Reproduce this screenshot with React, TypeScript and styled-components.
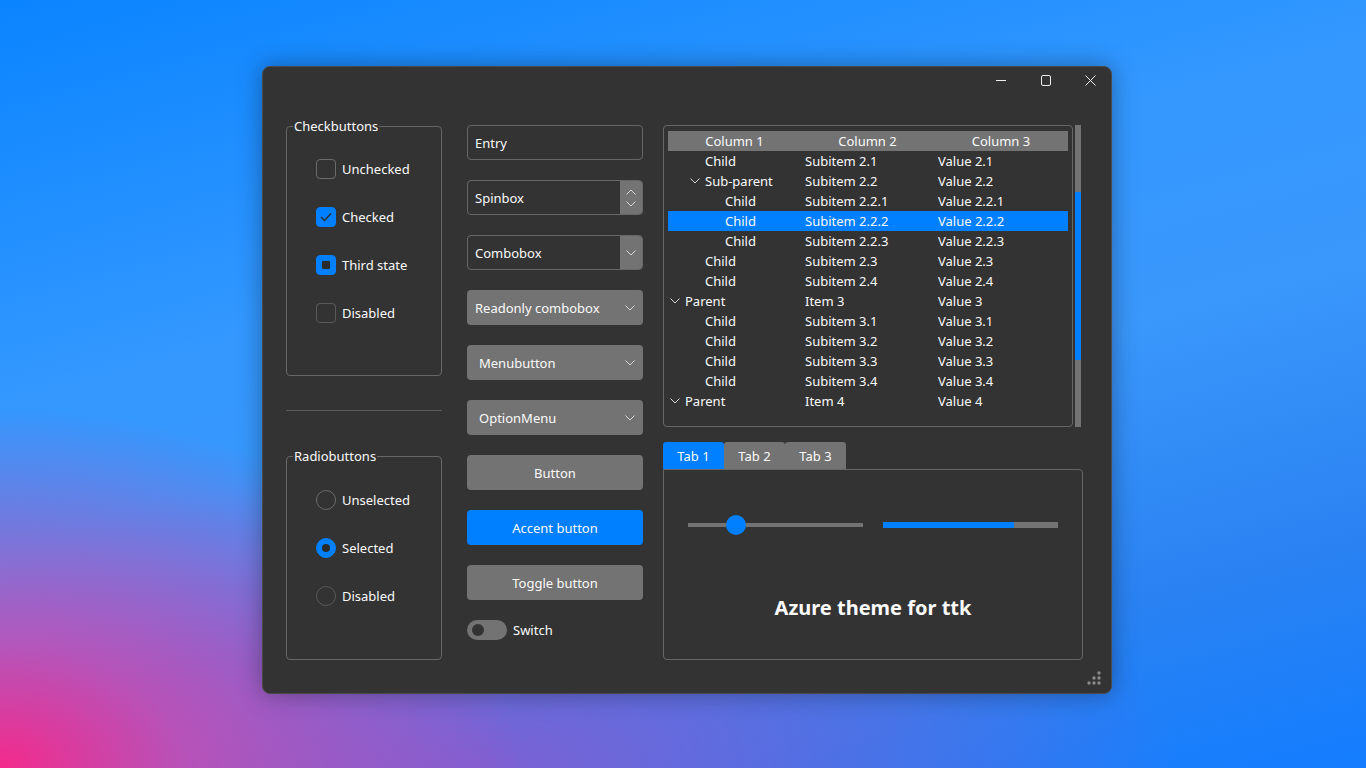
import React from "react";
import styled, { createGlobalStyle, css } from "styled-components";

const GlobalStyle = createGlobalStyle`
  html, body {
    margin: 0;
    padding: 0;
    width: 100%;
    height: 100%;
    overflow: hidden;
  }
  body {
    font-family: "Noto Sans", "Open Sans", sans-serif;
    font-size: 13px;
    color: #fafafa;
  }
`;

const ACCENT = "#007fff";
const BORDER = "#676767";
const GREY = "#737373";
const BG = "#333333";

type TreeRow = {
  level: number;
  open?: boolean;
  selected?: boolean;
  cells: [string, string, string];
};

const treeRows: TreeRow[] = [
  { level: 1, cells: ["Child", "Subitem 2.1", "Value 2.1"] },
  { level: 1, open: true, cells: ["Sub-parent", "Subitem 2.2", "Value 2.2"] },
  { level: 2, cells: ["Child", "Subitem 2.2.1", "Value 2.2.1"] },
  { level: 2, selected: true, cells: ["Child", "Subitem 2.2.2", "Value 2.2.2"] },
  { level: 2, cells: ["Child", "Subitem 2.2.3", "Value 2.2.3"] },
  { level: 1, cells: ["Child", "Subitem 2.3", "Value 2.3"] },
  { level: 1, cells: ["Child", "Subitem 2.4", "Value 2.4"] },
  { level: 0, open: true, cells: ["Parent", "Item 3", "Value 3"] },
  { level: 1, cells: ["Child", "Subitem 3.1", "Value 3.1"] },
  { level: 1, cells: ["Child", "Subitem 3.2", "Value 3.2"] },
  { level: 1, cells: ["Child", "Subitem 3.3", "Value 3.3"] },
  { level: 1, cells: ["Child", "Subitem 3.4", "Value 3.4"] },
  { level: 0, open: true, cells: ["Parent", "Item 4", "Value 4"] },
];

const Chevron = ({ up = false, size = 10 }: { up?: boolean; size?: number }) => (
  <svg width={size} height={size / 2 + 1} viewBox="0 0 10 6" fill="none">
    <polyline
      points={up ? "0.5,5.5 5,1 9.5,5.5" : "0.5,0.5 5,5 9.5,0.5"}
      stroke="#d6d6d6"
      strokeWidth="1"
    />
  </svg>
);

const App = () => {
  return (
    <>
      <GlobalStyle />
      <Desktop>
        <Window>
          <TitleBar>
            <CaptionButton>
              <svg width="10" height="10" viewBox="0 0 10 10">
                <line x1="0" y1="5.5" x2="10" y2="5.5" stroke="#eee" strokeWidth="1" />
              </svg>
            </CaptionButton>
            <CaptionButton>
              <svg width="10" height="11" viewBox="0 0 10 11" fill="none">
                <rect x="0.5" y="0.5" width="9" height="10" rx="1.5" stroke="#eee" strokeWidth="1" />
              </svg>
            </CaptionButton>
            <CaptionButton>
              <svg width="11" height="11" viewBox="0 0 11 11">
                <path d="M0.5 0.5 L10.5 10.5 M10.5 0.5 L0.5 10.5" stroke="#eee" strokeWidth="1" />
              </svg>
            </CaptionButton>
          </TitleBar>

          <Body>
            <LeftColumn>
              <LabelFrame $height={250}>
                <FrameLabel>Checkbuttons</FrameLabel>
                <OptionList $top={32}>
                  <OptionRow>
                    <CheckBox />
                    Unchecked
                  </OptionRow>
                  <OptionRow>
                    <CheckBox $on>
                      <svg width="12" height="10" viewBox="0 0 12 10" fill="none">
                        <polyline points="1,5 4.5,8.5 11,1.5" stroke="#2b2b2b" strokeWidth="1.4" />
                      </svg>
                    </CheckBox>
                    Checked
                  </OptionRow>
                  <OptionRow>
                    <CheckBox $on>
                      <ThirdMark />
                    </CheckBox>
                    Third state
                  </OptionRow>
                  <OptionRow>
                    <CheckBox $disabled />
                    Disabled
                  </OptionRow>
                </OptionList>
              </LabelFrame>

              <Separator />

              <LabelFrame $height={204}>
                <FrameLabel>Radiobuttons</FrameLabel>
                <OptionList $top={33}>
                  <OptionRow>
                    <Radio />
                    Unselected
                  </OptionRow>
                  <OptionRow>
                    <Radio $on>
                      <RadioDot />
                    </Radio>
                    Selected
                  </OptionRow>
                  <OptionRow>
                    <Radio $disabled />
                    Disabled
                  </OptionRow>
                </OptionList>
              </LabelFrame>
            </LeftColumn>

            <MiddleColumn>
              <Field>
                <FieldText>Entry</FieldText>
              </Field>
              <Field>
                <FieldText>Spinbox</FieldText>
                <SideButton>
                  <Chevron up />
                  <Chevron />
                </SideButton>
              </Field>
              <Field>
                <FieldText>Combobox</FieldText>
                <SideButton>
                  <Chevron />
                </SideButton>
              </Field>
              <DropButton $indent={8}>
                Readonly combobox
                <Chevron />
              </DropButton>
              <DropButton $indent={12}>
                Menubutton
                <Chevron />
              </DropButton>
              <DropButton $indent={12}>
                OptionMenu
                <Chevron />
              </DropButton>
              <PushButton>Button</PushButton>
              <PushButton $accent>Accent button</PushButton>
              <PushButton>Toggle button</PushButton>
              <SwitchRow>
                <SwitchTrack>
                  <SwitchKnob />
                </SwitchTrack>
                Switch
              </SwitchRow>
            </MiddleColumn>

            <RightColumn>
              <TreeArea>
                <TreeFrame>
                  <TreeHeader>
                    <HeadCell>Column 1</HeadCell>
                    <HeadCell>Column 2</HeadCell>
                    <HeadCell>Column 3</HeadCell>
                  </TreeHeader>
                  {treeRows.map((row, i) => (
                    <TreeLine key={i} $selected={row.selected}>
                      <TreeCell style={{ paddingLeft: 2 + row.level * 20 }}>
                        <Expander>{row.open && <Chevron />}</Expander>
                        {row.cells[0]}
                      </TreeCell>
                      <TreeCell>{row.cells[1]}</TreeCell>
                      <TreeCell>{row.cells[2]}</TreeCell>
                    </TreeLine>
                  ))}
                </TreeFrame>
                <ScrollTrack>
                  <ScrollThumb />
                </ScrollTrack>
              </TreeArea>

              <Notebook>
                <TabStrip>
                  <Tab $active>Tab 1</Tab>
                  <Tab>Tab 2</Tab>
                  <Tab>Tab 3</Tab>
                </TabStrip>
                <TabPanel>
                  <ControlsRow>
                    <Scale>
                      <ScaleThumb style={{ left: 38 }} />
                    </Scale>
                    <Progress>
                      <ProgressFill style={{ width: "75%" }} />
                    </Progress>
                  </ControlsRow>
                  <Heading>Azure theme for ttk</Heading>
                </TabPanel>
              </Notebook>
            </RightColumn>
          </Body>

          <Grip>
            <svg width="16" height="16" viewBox="0 0 16 16">
              {[
                [13, 3],
                [8, 8],
                [13, 8],
                [3, 13],
                [8, 13],
                [13, 13],
              ].map(([cx, cy], i) => (
                <circle key={i} cx={cx} cy={cy} r="1.7" fill="#8a8a8a" />
              ))}
            </svg>
          </Grip>
        </Window>
      </Desktop>
    </>
  );
};

const Desktop = styled.div`
  width: 1366px;
  height: 768px;
  display: flex;
  padding: 66px 0 0 262px;
  box-sizing: border-box;
  background:
    radial-gradient(ellipse 520px 360px at 0% 100%, #f42a8b 0%, rgba(214, 70, 170, 0.75) 35%, rgba(150, 90, 200, 0) 100%),
    radial-gradient(ellipse 700px 300px at 35% 100%, rgba(140, 90, 205, 0.85) 0%, rgba(120, 100, 210, 0) 100%),
    linear-gradient(165deg, #0a84ff 0%, #3398ff 35%, #3a97fb 55%, #2a82f2 80%, #137dff 100%);
`;

const Window = styled.div`
  position: relative;
  width: 850px;
  height: 628px;
  box-sizing: border-box;
  background: ${BG};
  border: 1px solid #4a4a4a;
  border-radius: 8px;
  box-shadow: 0 0 24px rgba(0, 0, 0, 0.35);
  display: flex;
  flex-direction: column;
`;

const TitleBar = styled.div`
  height: 28px;
  display: flex;
  justify-content: flex-end;
  margin-right: -2px;
`;

const CaptionButton = styled.div`
  width: 45px;
  height: 26px;
  display: flex;
  align-items: center;
  justify-content: center;
`;

const Body = styled.div`
  display: flex;
  padding: 30px 0 0 23px;
`;

const LeftColumn = styled.div`
  width: 156px;
  margin-top: 1px;
  display: flex;
  flex-direction: column;
`;

const LabelFrame = styled.div<{ $height: number }>`
  position: relative;
  height: ${(p) => p.$height}px;
  box-sizing: border-box;
  border: 1px solid ${BORDER};
  border-radius: 4px;
`;

const FrameLabel = styled.span`
  position: absolute;
  top: -10px;
  left: 6px;
  padding: 0 1px;
  line-height: 18px;
  background: ${BG};
`;

const OptionList = styled.div<{ $top: number }>`
  display: flex;
  flex-direction: column;
  gap: 28px;
  padding: ${(p) => p.$top}px 0 0 29px;
`;

const OptionRow = styled.div`
  display: flex;
  align-items: center;
  gap: 6px;
  height: 20px;
`;

const boxBase = css<{ $on?: boolean; $disabled?: boolean }>`
  width: 20px;
  height: 20px;
  box-sizing: border-box;
  display: flex;
  align-items: center;
  justify-content: center;
  border: 1px solid ${(p) => (p.$on ? ACCENT : p.$disabled ? "#5a5a5a" : "#6c6c6c")};
  background: ${(p) => (p.$on ? ACCENT : "transparent")};
`;

const CheckBox = styled.div<{ $on?: boolean; $disabled?: boolean }>`
  ${boxBase};
  border-radius: 4px;
`;

const ThirdMark = styled.div`
  width: 8px;
  height: 8px;
  border-radius: 1px;
  background: #2b2b2b;
`;

const Radio = styled.div<{ $on?: boolean; $disabled?: boolean }>`
  ${boxBase};
  border-radius: 50%;
`;

const RadioDot = styled.div`
  width: 8px;
  height: 8px;
  border-radius: 50%;
  background: #2b2b2b;
`;

const Separator = styled.div`
  height: 1px;
  background: #5c5c5c;
  margin: 34px 0 45px;
`;

const MiddleColumn = styled.div`
  width: 176px;
  margin-left: 25px;
  display: flex;
  flex-direction: column;
  gap: 20px;
`;

const Field = styled.div`
  height: 35px;
  box-sizing: border-box;
  display: flex;
  border: 1px solid ${BORDER};
  border-radius: 4px;
  overflow: hidden;
`;

const FieldText = styled.div`
  flex: 1;
  display: flex;
  align-items: center;
  padding-left: 7px;
`;

const SideButton = styled.div`
  width: 22px;
  background: ${GREY};
  display: flex;
  flex-direction: column;
  align-items: center;
  justify-content: center;
  gap: 6px;
`;

const DropButton = styled.div<{ $indent: number }>`
  height: 35px;
  box-sizing: border-box;
  display: flex;
  align-items: center;
  justify-content: space-between;
  padding: 0 8px 0 ${(p) => p.$indent}px;
  background: ${GREY};
  border-radius: 4px;
`;

const PushButton = styled.div<{ $accent?: boolean }>`
  height: 35px;
  display: flex;
  align-items: center;
  justify-content: center;
  background: ${(p) => (p.$accent ? ACCENT : GREY)};
  border-radius: 4px;
`;

const SwitchRow = styled.div`
  height: 20px;
  display: flex;
  align-items: center;
  gap: 6px;
`;

const SwitchTrack = styled.div`
  width: 40px;
  height: 20px;
  border-radius: 10px;
  background: ${GREY};
  display: flex;
  align-items: center;
  padding-left: 5px;
  box-sizing: border-box;
`;

const SwitchKnob = styled.div`
  width: 12px;
  height: 12px;
  border-radius: 50%;
  background: ${BG};
`;

const RightColumn = styled.div`
  width: 420px;
  margin-left: 20px;
  display: flex;
  flex-direction: column;
`;

const TreeArea = styled.div`
  display: flex;
  gap: 2px;
  height: 302px;
`;

const TreeFrame = styled.div`
  width: 410px;
  box-sizing: border-box;
  border: 1px solid ${BORDER};
  border-radius: 4px;
  padding: 5px 4px;
`;

const rowGrid = css`
  display: grid;
  grid-template-columns: 133px 133px 1fr;
  height: 20px;
  align-items: center;
`;

const TreeHeader = styled.div`
  ${rowGrid};
  background: ${GREY};
`;

const HeadCell = styled.div`
  text-align: center;
`;

const TreeLine = styled.div<{ $selected?: boolean }>`
  ${rowGrid};
  background: ${(p) => (p.$selected ? ACCENT : "transparent")};
`;

const TreeCell = styled.div`
  display: flex;
  align-items: center;
  padding-left: 4px;
  white-space: nowrap;
`;

const Expander = styled.span`
  width: 15px;
  display: flex;
  align-items: center;
`;

const ScrollTrack = styled.div`
  width: 6px;
  background: ${GREY};
  display: flex;
  flex-direction: column;
  padding-top: 67px;
  box-sizing: border-box;
`;

const ScrollThumb = styled.div`
  height: 168px;
  background: ${ACCENT};
`;

const Notebook = styled.div`
  margin-top: 15px;
  display: flex;
  flex-direction: column;
`;

const TabStrip = styled.div`
  display: flex;
`;

const Tab = styled.div<{ $active?: boolean }>`
  width: 61px;
  height: 27px;
  display: flex;
  align-items: center;
  justify-content: center;
  background: ${(p) => (p.$active ? ACCENT : GREY)};
  border-radius: 3px 3px 0 0;
`;

const TabPanel = styled.div`
  height: 191px;
  box-sizing: border-box;
  border: 1px solid ${BORDER};
  border-radius: 0 4px 4px 4px;
  padding: 45px 24px 0;
  display: flex;
  flex-direction: column;
`;

const ControlsRow = styled.div`
  display: flex;
  gap: 20px;
  height: 20px;
  align-items: center;
`;

const Scale = styled.div`
  position: relative;
  width: 175px;
  height: 4px;
  background: ${GREY};
`;

const ScaleThumb = styled.div`
  position: absolute;
  top: -8px;
  width: 20px;
  height: 20px;
  border-radius: 50%;
  background: ${ACCENT};
`;

const Progress = styled.div`
  width: 175px;
  height: 6px;
  background: ${GREY};
  display: flex;
`;

const ProgressFill = styled.div`
  background: ${ACCENT};
`;

const Heading = styled.div`
  margin-top: 60px;
  text-align: center;
  font-size: 20px;
  font-weight: 700;
  line-height: 26px;
`;

const Grip = styled.div`
  position: absolute;
  right: 9px;
  bottom: 7px;
  width: 16px;
  height: 16px;
`;

export default App;
